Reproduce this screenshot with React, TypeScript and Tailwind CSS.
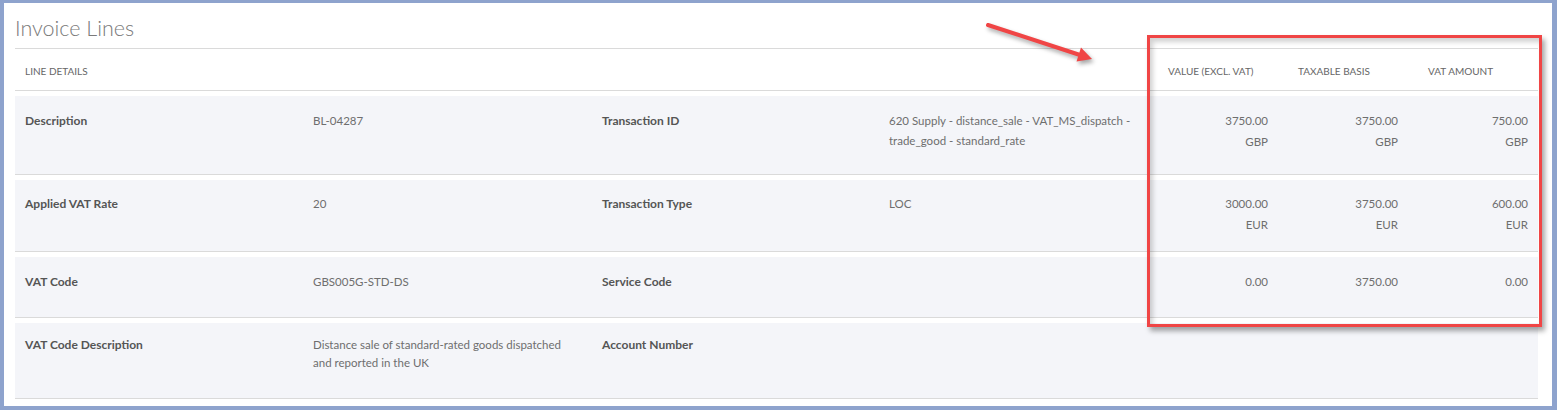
import React from "react"

type Row = {
    label1: string
    value1: React.ReactNode
    label2: string
    value2: React.ReactNode
    nums: [string, string, string]
    cur?: string
    h: string
    pt: string
}

const rows: Row[] = [
    {
        label1: "Description",
        value1: "BL-04287",
        label2: "Transaction ID",
        value2: (
            <>
                <span className="block">620 Supply - distance_sale - VAT_MS_dispatch -</span>
                <span className="block">trade_good - standard_rate</span>
            </>
        ),
        nums: ["3750.00", "3750.00", "750.00"],
        cur: "GBP",
        h: "h-[79px]",
        pt: "pt-[15px]",
    },
    {
        label1: "Applied VAT Rate",
        value1: "20",
        label2: "Transaction Type",
        value2: "LOC",
        nums: ["3000.00", "3750.00", "600.00"],
        cur: "EUR",
        h: "h-[72px]",
        pt: "pt-[14px]",
    },
    {
        label1: "VAT Code",
        value1: "GBS005G-STD-DS",
        label2: "Service Code",
        value2: "",
        nums: ["0.00", "3750.00", "0.00"],
        h: "h-[61px]",
        pt: "pt-[15px]",
    },
]

const valueCls = "text-[11.5px] font-normal text-[#6e6e6e]"

function NumCell({ value, cur }: { value: string; cur?: string }) {
    return (
        <div className={`pr-[10px] text-right leading-[20px] ${valueCls}`}>
            <div>{value}</div>
            {cur && <div className="mt-[1px]">{cur}</div>}
        </div>
    )
}

export default function App() {
    const cols = "grid grid-cols-[288px_288px_288px_269px_130px_130px_130px]"

    return (
        <div
            className="w-[1557px] h-[410px] bg-[#8ea3cd] pt-[3px] pl-[4px] pr-[5px] pb-[4px] text-[12px]"
            style={{ fontFamily: "Lato, 'Noto Sans', sans-serif" }}
        >
            <div className="relative h-full bg-white pl-[11px] pr-[14px]">
                <div className="h-[46px] pt-[12px] border-b border-[#dadada]">
                    <h2 className="text-[21.5px] leading-[26px] font-light text-[#7a7a7a]">Invoice Lines</h2>
                </div>

                <div className={`${cols} h-[42px] pt-[3px] items-center border-b border-[#dadada] text-[10px] font-normal uppercase text-[#666]`}>
                    <div className="col-span-4 pl-[10px]">Line Details</div>
                    <div className="pl-[20px]">Value (Excl. VAT)</div>
                    <div className="pl-[20px]">Taxable Basis</div>
                    <div className="pl-[20px]">VAT Amount</div>
                </div>

                {rows.map(r => (
                    <div
                        key={r.label1}
                        className={`${cols} ${r.h} ${r.pt} mt-[5px] bg-[#f4f5f9] border-b border-[#dadada] leading-[20px]`}
                    >
                        <div className="pl-[10px] font-bold text-[#555]">{r.label1}</div>
                        <div className={`pl-[10px] ${valueCls}`}>{r.value1}</div>
                        <div className="pl-[11px] font-bold text-[#555]">{r.label2}</div>
                        <div className={`pl-[10px] ${valueCls}`}>{r.value2}</div>
                        {r.nums.map((n, i) => (
                            <NumCell key={i} value={n} cur={r.cur} />
                        ))}
                    </div>
                ))}

                <div className={`${cols} h-[76px] pt-[12px] mt-[5px] bg-[#f4f5f9] border-b border-[#dadada] leading-[20px]`}>
                    <div className="pl-[10px] font-bold text-[#555]">VAT Code Description</div>
                    <div className={`pl-[10px] leading-[18px] ${valueCls}`}>
                        <span className="block pt-[1px]">Distance sale of standard-rated goods dispatched</span>
                        <span className="block">and reported in the UK</span>
                    </div>
                    <div className="pl-[11px] font-bold text-[#555]">Account Number</div>
                    <div />
                    <div />
                    <div />
                    <div />
                </div>

                {/* annotation: arrow + highlight box */}
                <svg
                    className="absolute left-[976px] top-[14px] drop-shadow-[2px_3px_2px_rgba(0,0,0,0.35)]"
                    width="125"
                    height="55"
                    viewBox="0 0 125 55"
                >
                    <line x1="8" y1="8" x2="100" y2="38" stroke="#f04545" strokeWidth="4" strokeLinecap="round" />
                    <polygon points="112,42 101,30.5 96.5,44.5" fill="#f04545" />
                </svg>
                <div className="absolute left-[1143px] top-[32px] w-[395px] h-[292px] border-[3.5px] border-[#f04545] shadow-[3px_4px_5px_rgba(0,0,0,0.35),inset_3px_4px_5px_rgba(0,0,0,0.18)]" />
            </div>
        </div>
    )
}
